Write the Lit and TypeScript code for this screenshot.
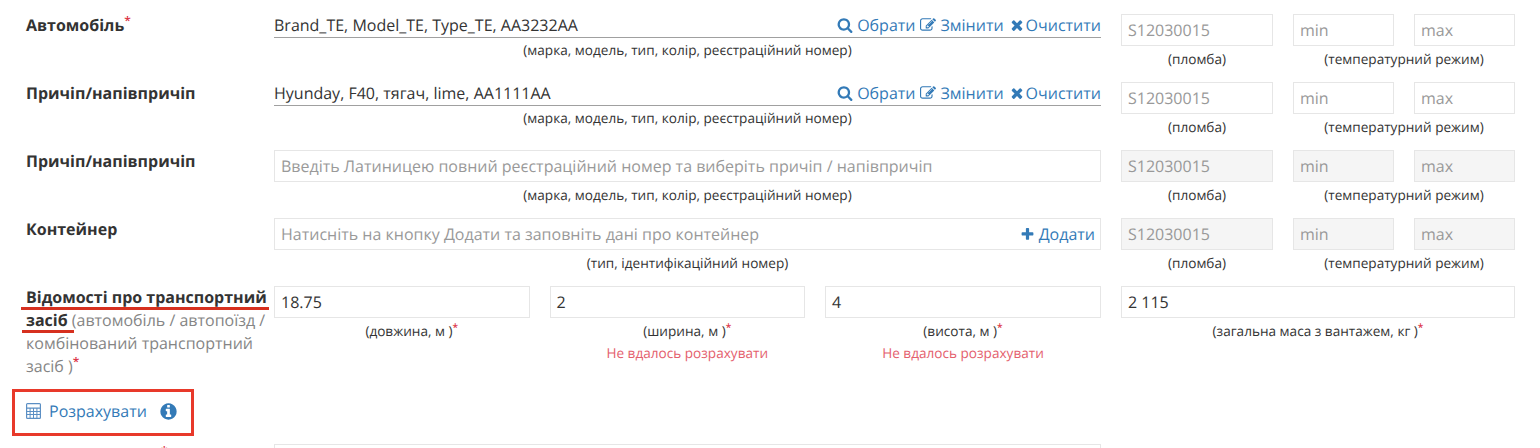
import { LitElement, html, css } from "lit";
import { customElement } from "lit/decorators.js";

const P = {
  search: "M1216 832q0-185-131.500-316.500t-316.500-131.500-316.500 131.500-131.500 316.500 131.500 316.500 316.500 131.500 316.500-131.500 131.500-316.500zm512 832q0 52-38 90t-90 38q-54 0-90-38l-343-342q-179 124-399 124-143 0-273.500-55.500t-225-150-150-225-55.500-273.500 55.500-273.500 150-225 225-150 273.500-55.500 273.500 55.500 225 150 150 225 55.500 273.500q0 220-124 399l343 343q37 37 37 90z",
  edit: "M888 1184l116-116-152-152-116 116v56h96v96h56zm440-720q-16-16-33 1l-350 350q-17 17-1 33t33-1l350-350q17-17 1-33zm80 594v190q0 119-84.500 203.500t-203.500 84.500h-832q-119 0-203.500-84.500t-84.500-203.500v-832q0-119 84.500-203.500t203.500-84.500h832q63 0 117 25 15 7 18 23 3 17-9 29l-49 49q-14 14-32 8-23-6-45-6h-832q-66 0-113 47t-47 113v832q0 66 47 113t113 47h832q66 0 113-47t47-113v-126q0-13 9-22l64-64q15-15 35-7t20 29zm-96-738l288 288-672 672h-288v-288zm444 132l-92 92-288-288 92-92q28-28 68-28t68 28l152 152q28 28 28 68t-28 68z",
  times: "M1490 1322q0 40-28 68l-136 136q-28 28-68 28t-68-28l-294-294-294 294q-28 28-68 28t-68-28l-136-136q-28-28-28-68t28-68l294-294-294-294q-28-28-28-68t28-68l136-136q28-28 68-28t68 28l294 294 294-294q28-28 68-28t68 28l136 136q28 28 28 68t-28 68l-294 294 294 294q28 28 28 68z",
  plus: "M1600 736v192q0 40-28 68t-68 28h-416v416q0 40-28 68t-68 28h-192q-40 0-68-28t-28-68v-416h-416q-40 0-68-28t-28-68v-192q0-40 28-68t68-28h416v-416q0-40 28-68t68-28h192q40 0 68 28t28 68v416h416q40 0 68 28t28 68z",
  info: "M1152 1376v-160q0-14-9-23t-23-9h-96v-512q0-14-9-23t-23-9h-320q-14 0-23 9t-9 23v160q0 14 9 23t23 9h96v320h-96q-14 0-23 9t-9 23v160q0 14 9 23t23 9h448q14 0 23-9t9-23zm-128-896v-160q0-14-9-23t-23-9h-192q-14 0-23 9t-9 23v160q0 14 9 23t23 9h192q14 0 23-9t9-23zm640 416q0 209-103 385.500t-279.500 279.500-385.500 103-385.500-103-279.500-279.500-103-385.500 103-385.500 279.500-279.500 385.500-103 385.500 103 279.500 279.500 103 385.500z",
};

const icon = (d: string, w: number, h: number, cls = "ic") =>
  html`<svg class=${cls} width=${w} height=${h} viewBox="0 0 1792 1792" fill="currentColor"><path d=${d}></path></svg>`;

const calc = () => html`<svg class="ic calc-ic" width="15" height="16" viewBox="0 0 15 16" fill="currentColor">
  <path fill-rule="evenodd" d="M1.500 0h12A1.500 1.500 0 0 1 15 1.500v13a1.500 1.500 0 0 1-1.500 1.500h-12A1.500 1.500 0 0 1 0 14.500v-13A1.500 1.500 0 0 1 1.500 0zM1.200 1.200v3.300h12.600v-3.300zM1.200 5.700v2.200h2.400v-2.200zM4.600 5.700v2.200h2.400v-2.200zM8 5.700v2.200h2.400v-2.200zM11.400 5.700v2.200h2.400v-2.200zM1.200 8.900v2.200h2.400v-2.200zM4.600 8.900v2.200h2.400v-2.200zM8 8.900v2.200h2.400v-2.200zM11.400 8.900v2.200h2.400v-2.200zM1.200 12.100v2.700h2.400v-2.700zM4.600 12.100v2.700h2.400v-2.700zM8 12.100v2.700h2.400v-2.700zM11.400 12.100v2.700h2.400v-2.700z"></path>
</svg>`;

const star = html`<sup class="star">*</sup>`;

@customElement("app-root")
export class AppRoot extends LitElement {
  static styles = css`
    :host {
      display: block;
      position: relative;
      height: 448px;
      width: 1540px;
      overflow: hidden;
      background: #fff;
      font-family: "Open Sans", "Noto Sans", sans-serif;
      color: #333;
      font-size: 16px;
      text-rendering: geometricPrecision;
    }
    .form { padding: 14px 0 0 26px; }
    .row { display: flex; height: 68px; }
    .row.tall { height: 101px; }
    .label {
      width: 248px;
      flex: none;
      box-sizing: border-box;
      padding-right: 4px;
      font-size: 16px;
      line-height: 23px;
      font-weight: 700;
      color: #333;
    }
    .label .muted { font-weight: 400; color: #858585; }
    .star {
      color: #dc3545;
      font-weight: 600;
      font-size: 75%;
      line-height: 0;
      vertical-align: baseline;
      position: relative;
      top: -0.5em;
    }
    .main { width: 827px; flex: none; }
    .extras { display: flex; margin-left: 20px; }
    .seal { width: 152px; }
    .temp { width: 222px; margin-left: 20px; }
    .pair { display: flex; gap: 20px; }
    .pair .box { width: 101px; }
    .box {
      box-sizing: border-box;
      height: 32px;
      border: 1px solid #e6e6e6;
      padding: 0 6px;
      display: flex;
      align-items: center;
      justify-content: space-between;
      white-space: nowrap;
      color: #333;
      background: #fff;
    }
    .box.ph { color: #999; }
    .box.off { background: #f5f5f5; }
    .picked {
      box-sizing: border-box;
      height: 24px;
      padding-bottom: 2px;
      border-bottom: 1px solid #a0a0a0;
      display: flex;
      justify-content: space-between;
      align-items: center;
      white-space: nowrap;
    }
    .hint {
      font-size: 13.600px;
      line-height: 16px;
      text-align: center;
      color: #333;
      padding-top: 5px;
      white-space: nowrap;
    }
    .picked + .hint { padding-top: 4px; }
    .links { display: flex; gap: 5px; color: #337ab7; }
    .link { display: inline-flex; align-items: center; gap: 4px; color: #337ab7; }
    .link.add { margin-right: -1px; }
    .ic { flex: none; }
    .ic.tight { margin-right: -3px; }
    .trio { display: flex; }
    .trio .c1, .trio .c2 { width: 275.500px; }
    .trio .c1 .box, .trio .c2 .box { margin-right: 20px; }
    .trio .c3 { width: 276px; }
    .trio .c4 { width: 394px; margin-left: 20px; }
    .err {
      font-size: 13.600px;
      line-height: 16px;
      padding-top: 6px;
      text-align: center;
      color: #e4606d;
    }
    .calc {
      display: flex;
      align-items: center;
      height: 44px;
      color: #337ab7;
      margin-top: 2px;
    }
    .calc-ic { color: #5b8fc4; }
    .calc .txt { margin-left: 8px; }
    .calc .info { margin-left: 12px; display: inline-flex; }
    .next { display: flex; margin-top: 11px; }
    .next .label { padding-left: 135px; }
    .mark-box {
      position: absolute;
      left: 12px;
      top: 389px;
      width: 182px;
      height: 47px;
      box-sizing: border-box;
      border: 3px solid #e8392a;
    }
    .mark-line {
      position: absolute;
      height: 3px;
      background: #d6301f;
    }
    .mark-line.one { left: 21px; top: 307px; width: 248px; }
    .mark-line.two { left: 22px; top: 330px; width: 52px; }
  `;

  private extras(off: boolean) {
    const cls = off ? "box ph off" : "box ph";
    return html`<div class="extras">
      <div class="seal"><div class=${cls}>S12030015</div><div class="hint">(пломба)</div></div>
      <div class="temp">
        <div class="pair"><div class=${cls}>min</div><div class=${cls}>max</div></div>
        <div class="hint">(температурний режим)</div>
      </div>
    </div>`;
  }

  private picked(text: string) {
    return html`<div class="main">
      <div class="picked">
        <span>${text}</span>
        <span class="links">
          <span class="link">${icon(P.search, 16, 16)}Обрати</span>
          <span class="link">${icon(P.edit, 16, 16)}Змінити</span>
          <span class="link">${icon(P.times, 16, 16, "ic tight")}Очистити</span>
        </span>
      </div>
      <div class="hint">(марка, модель, тип, колір, реєстраційний номер)</div>
    </div>`;
  }

  render() {
    return html`
      <div class="form">
        <div class="row">
          <div class="label">Автомобіль${star}</div>
          ${this.picked("Brand_TE, Model_TE, Type_TE, AA3232AA")}
          ${this.extras(false)}
        </div>
        <div class="row">
          <div class="label">Причіп/напівпричіп</div>
          ${this.picked("Hyunday, F40, тягач, lime, AA1111AA")}
          ${this.extras(false)}
        </div>
        <div class="row">
          <div class="label">Причіп/напівпричіп</div>
          <div class="main">
            <div class="box ph">Введіть Латиницею повний реєстраційний номер та виберіть причіп / напівпричіп</div>
            <div class="hint">(марка, модель, тип, колір, реєстраційний номер)</div>
          </div>
          ${this.extras(true)}
        </div>
        <div class="row">
          <div class="label">Контейнер</div>
          <div class="main">
            <div class="box ph">
              <span>Натисніть на кнопку Додати та заповніть дані про контейнер</span>
              <span class="link add">${icon(P.plus, 15, 15)}Додати</span>
            </div>
            <div class="hint">(тип, ідентифікаційний номер)</div>
          </div>
          ${this.extras(true)}
        </div>
        <div class="row tall">
          <div class="label">Відомості про транспортний засіб <span class="muted">(автомобіль / автопоїзд / комбінований транспортний засіб )${star}</span></div>
          <div class="trio">
            <div class="c1"><div class="box">18.75</div><div class="hint">(довжина, м )${star}</div></div>
            <div class="c2"><div class="box">2</div><div class="hint">(ширина, м )${star}</div><div class="err">Не вдалось розрахувати</div></div>
            <div class="c3"><div class="box">4</div><div class="hint">(висота, м )${star}</div><div class="err">Не вдалось розрахувати</div></div>
            <div class="c4"><div class="box">2 115</div><div class="hint">(загальна маса з вантажем, кг )${star}</div></div>
          </div>
        </div>
        <div class="calc">
          ${calc()}<span class="txt">Розрахувати</span>
          <span class="info">${icon(P.info, 19, 19)}</span>
        </div>
        <div class="next">
          <div class="label">${star}</div>
          <div class="main"><div class="box"></div></div>
        </div>
      </div>
      <div class="mark-line one"></div>
      <div class="mark-line two"></div>
      <div class="mark-box"></div>
    `;
  }
}
